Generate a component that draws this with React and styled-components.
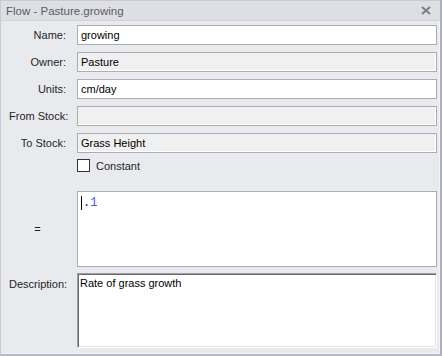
import React from 'react';
import styled, { createGlobalStyle } from 'styled-components';

const GlobalStyle = createGlobalStyle`
  html, body {
    margin: 0;
    padding: 0;
    background: #e9eaee;
  }
  * {
    box-sizing: border-box;
  }
`;

const Window = styled.div`
  width: 442px;
  height: 356px;
  display: flex;
  flex-direction: column;
  background: #e9eaee;
  border-left: 1px solid #c9cad1;
  border-right: 2px solid #aeafb9;
  border-bottom: 2px solid #b6b7c1;
  box-shadow: inset -1px -1px 0 #f4f4f7;
  font-family: 'Liberation Sans', Arial, sans-serif;
  font-size: 11px;
  color: #1f1f2a;
  overflow: hidden;
`;

const TitleBar = styled.div`
  height: 21px;
  flex-shrink: 0;
  display: flex;
  align-items: center;
  justify-content: space-between;
  padding: 0 9px 0 5px;
  background: #dedfe4;
  border-top: 1px solid #c9cad1;
  border-bottom: 1px solid #d2d3d9;
  color: #5b5c66;
  font-size: 11.5px;
`;

const CloseIcon = styled.svg`
  width: 10px;
  height: 9px;
  display: block;
`;

const Form = styled.div`
  display: grid;
  grid-template-columns: 57px 1fr;
  column-gap: 11px;
  padding: 4px 3px 0 8px;
`;

const Label = styled.div`
  text-align: ${p => (p.$center ? 'center' : 'right')};
  align-self: ${p => (p.$top ? 'start' : 'center')};
  padding-top: ${p => (p.$top ? '5px' : '0')};
  margin-top: ${p => p.$mt || 0}px;
  white-space: nowrap;
`;

const Field = styled.div`
  height: 20px;
  margin-top: ${p => p.$mt || 0}px;
  padding: 0 3px;
  display: flex;
  align-items: center;
  border: 1px solid #abadb3;
  background: ${p => (p.$readOnly ? '#f0f0f0' : '#ffffff')};
  box-shadow: ${p => (p.$readOnly ? 'inset -1px -1px 0 #ffffff' : 'none')};
  color: #000;
`;

const CheckRow = styled.div`
  grid-column: 2;
  margin-top: 6px;
  height: 13px;
  display: flex;
  align-items: center;
  gap: 6px;
`;

const Box = styled.span`
  width: 13px;
  height: 13px;
  border: 1px solid #333;
  background: #fff;
`;

const Equation = styled.div`
  margin-top: 19px;
  height: 76px;
  border: 1px solid #abadb3;
  background: #fff;
  padding: 4px 3px;
  font-family: 'Liberation Mono', monospace;
  font-size: 12px;
  display: flex;
  align-items: flex-start;
`;

const Caret = styled.span`
  width: 1px;
  height: 14px;
  background: #000;
  margin-right: 1px;
`;

const Token = styled.span`
  color: ${p => p.$color};
  line-height: 14px;
`;

const Description = styled.div`
  margin-top: 6px;
  height: 75px;
  background: #fff;
  border: 1px solid;
  border-color: #a0a0a0 #ffffff #ffffff #a0a0a0;
  box-shadow: inset 1px 1px 0 #696969, inset -1px -1px 0 #e3e3e3;
  padding: 3px 2px;
  color: #000;
`;

const rows = [
  { label: 'Name:', value: 'growing' },
  { label: 'Owner:', value: 'Pasture', readOnly: true },
  { label: 'Units:', value: 'cm/day' },
  { label: 'From Stock:', value: '', readOnly: true },
  { label: 'To Stock:', value: 'Grass Height', readOnly: true },
];

export default function App() {
  return (
    <>
      <GlobalStyle />
      <Window>
        <TitleBar>
          <span>Flow - Pasture.growing</span>
          <CloseIcon viewBox="0 0 10 9">
            <path d="M1 1 L9 8 M9 1 L1 8" stroke="#7c7d86" strokeWidth="2" />
          </CloseIcon>
        </TitleBar>
        <Form>
          {rows.map((r, i) => (
            <React.Fragment key={r.label}>
              <Label $mt={i ? 7 : 0}>{r.label}</Label>
              <Field $mt={i ? 7 : 0} $readOnly={r.readOnly}>{r.value}</Field>
            </React.Fragment>
          ))}
          <CheckRow>
            <Box />
            <span>Constant</span>
          </CheckRow>
          <Label $center $mt={19}>=</Label>
          <Equation>
            <Caret />
            <Token $color="#1a1aa6">.</Token>
            <Token $color="#4f4fff">1</Token>
          </Equation>
          <Label $top $mt={6}>Description:</Label>
          <Description>Rate of grass growth</Description>
        </Form>
      </Window>
    </>
  );
}
